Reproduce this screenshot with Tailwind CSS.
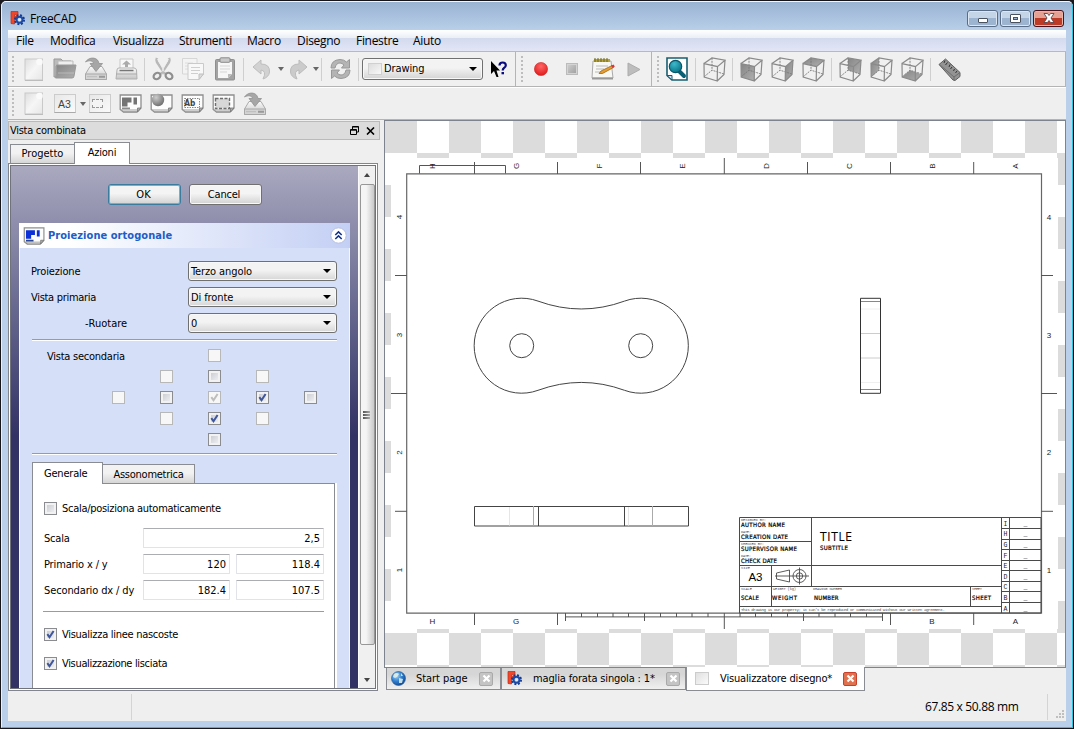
<!DOCTYPE html>
<html lang="it">
<head>
<meta charset="utf-8">
<title>FreeCAD</title>
<script src="https://cdn.jsdelivr.net/npm/@tailwindcss/browser@4"></script>
</head>
<body class="bg-[#1a1a1e] w-[1074px] h-[729px] overflow-hidden text-black font-['DejaVu_Sans_Condensed','DejaVu_Sans',sans-serif] text-[11px] leading-[14px] [font-stretch:condensed]">
<svg width="0" height="0" class="absolute">
  <defs>
    <linearGradient id="gGray" x1="0" y1="0" x2="0" y2="1"><stop offset="0" stop-color="#fafafa"/><stop offset="1" stop-color="#c4c4c4"/></linearGradient>
    <linearGradient id="gDark" x1="0" y1="0" x2="1" y2="1"><stop offset="0" stop-color="#858585"/><stop offset="1" stop-color="#b0b0b0"/></linearGradient>
    <linearGradient id="gPage" x1="0" y1="0" x2="1" y2="1"><stop offset="0" stop-color="#dedede"/><stop offset=".5" stop-color="#f6f6f6"/><stop offset="1" stop-color="#e6e6e6"/></linearGradient>
    <radialGradient id="gRed" cx=".5" cy=".3" r=".7"><stop offset="0" stop-color="#f66"/><stop offset="1" stop-color="#e01a1a"/></radialGradient>
    <radialGradient id="gTeal" cx=".4" cy=".3" r=".7"><stop offset="0" stop-color="#3fb8cc"/><stop offset="1" stop-color="#087688"/></radialGradient>
    <radialGradient id="gGlobe" cx=".35" cy=".3" r=".8"><stop offset="0" stop-color="#a9d4f5"/><stop offset=".5" stop-color="#2f7fce"/><stop offset="1" stop-color="#0d3f8c"/></radialGradient>
    <radialGradient id="gBall" cx=".35" cy=".3" r=".8"><stop offset="0" stop-color="#ccc"/><stop offset="1" stop-color="#666"/></radialGradient>
    <symbol id="cube" viewBox="0 0 23 25">
      <path d="M9 .8V13.2M1 19.8 9 13.2 21 17" fill="none" stroke="#777" stroke-width=".9" stroke-dasharray="2 1"/>
      <path d="M1 6.600 14.500 9.600 14.200 24 1.200 20ZM1 6.600 9 .9 22 3.200 14.500 9.600M22 3.200 21 17.500 14.200 24" fill="none" stroke="#8a8a8a" stroke-width="1.200"/>
    </symbol>
    <symbol id="save" viewBox="0 0 24 24">
      <path d="M1.500 17 6 9.500H18L22.500 17V22.500H1.500Z" fill="url(#gGray)" stroke="#aaa"/>
      <path d="M1.500 17H22.500V22.500H1.500Z" fill="#d4d4d4" stroke="#a8a8a8"/>
      <path d="M3 19.700H13" stroke="#bbb"/><path d="M15 19.700H21" stroke="#999" stroke-width="2"/>
      <path d="M1.500 5C5-.5 14-.5 15 6.500H18.500L12 14.500 6 6.500H9.500C9 3.500 5 3 1.500 5Z" fill="#a6a6a6" stroke="#929292" stroke-width=".8"/>
    </symbol>
    <symbol id="newdoc" viewBox="0 0 20 23">
      <rect x="1" y="1" width="17.500" height="21" fill="url(#gPage)" stroke="#c9c9c9"/><circle cx="15.500" cy="4" r="3.300" fill="#fafafa"/><path d="M1 22.500H19" stroke="#bdbdbd"/>
    </symbol>
    <symbol id="sheet" viewBox="0 0 23 19">
      <path d="M1.200 1H22V14L18 18H4.500L1.200 15.500Z" fill="#fdfdfd" stroke="#8e8e8e" stroke-width="1.300"/>
      <path d="M2 16H18M4 18H18" fill="none" stroke="#a0a0a0"/><path d="M22 14H18.500V18Z" fill="#aaa" stroke="#777" stroke-width=".8"/>
    </symbol>
    <symbol id="fc" viewBox="0 0 15 15">
      <path d="M1 .5H8V3.800H4.500V5.500H7V8.500H4.500V13L1 12.500Z" fill="#f0462a" stroke="#b92a17" stroke-width=".7"/>
      <circle cx="9.500" cy="8.700" r="4.200" fill="none" stroke="#163a8a" stroke-width="2.600" stroke-dasharray="1.800 1.500"/>
      <circle cx="9.500" cy="8.700" r="3" fill="#b9cff0" stroke="#1d4aa5" stroke-width="2"/><circle cx="9.500" cy="8.700" r="1.300" fill="#e8effa"/>
    </symbol>
    <symbol id="tri" viewBox="0 0 8 4"><path d="M0 0H8L4 4Z"/></symbol>
    <symbol id="chk" viewBox="0 0 9 9"><path d="M1.300 4.200 3.500 7.200 7.600 1" fill="none" stroke="currentColor" stroke-width="2"/></symbol>
    <symbol id="x" viewBox="0 0 9 9"><path d="M1.500 1.500 7.500 7.500M7.500 1.500 1.500 7.500" stroke="#fff" stroke-width="2.200"/></symbol>
  </defs>
</svg>

<div class="w-[1074px] h-[729px] rounded-t-[6px] border border-[#15151a] border-r-black overflow-hidden bg-[#bad0ea]">
<div class="w-[1072px] h-[727px] flex flex-col border-l border-t border-l-[#e8f1fa] border-t-[#f2f7fc] border-r border-r-[#2fc4dd] border-b border-b-[#35bdd5] rounded-t-[5px] bg-linear-to-b from-[#99b3d2] to-[#bad0ea] to-[29px] px-[6px]">

  <!-- title bar -->
  <header class="h-7 shrink-0 flex items-center pl-[2px] pt-[5px] font-['Open_Sans'] [font-stretch:normal] text-[12px]">
    <svg class="w-[15px] h-[15px]"><use href="#fc"/></svg>
    <span class="ml-[5px] tracking-[-0.3px] grow">FreeCAD</span>
    <div class="flex gap-[2px] mr-[2px] -mt-px">
      <div class="w-[31px] h-[17px] rounded-[3px] border border-[#5a6d87] bg-linear-to-b from-[#c5d5e8] from-45% to-[#9cb4d0] to-50% shadow-[inset_0_0_0_1px_#dbe6f2] flex justify-center items-end pb-[3px]"><i class="w-[10px] h-[5px] bg-white border border-[#4a5260] rounded-[1px]"></i></div>
      <div class="w-[31px] h-[17px] rounded-[3px] border border-[#5a6d87] bg-linear-to-b from-[#c5d5e8] from-45% to-[#9cb4d0] to-50% shadow-[inset_0_0_0_1px_#dbe6f2] flex justify-center items-center"><i class="w-[11px] h-[9px] bg-white border border-[#4a5260] rounded-[1px] flex items-center justify-center"><b class="w-[5px] h-[3px] border border-[#4a5260] bg-[#9cb4d0]"></b></i></div>
      <div class="w-[31px] h-[17px] rounded-[3px] border border-[#4c1018] bg-linear-to-b from-[#e5a294] from-45% to-[#bd3b26] to-50% shadow-[inset_0_0_0_1px_#eab5a8] flex justify-center items-center"><svg class="w-[12px] h-[10px]" viewBox="0 0 12 10"><path d="M1 .5H4.500L6 2.500 7.500 .5H11L8 5 11 9.500H7.500L6 7.500 4.500 9.500H1L4 5Z" fill="#fff" stroke="#57464f" stroke-width=".9"/></svg></div>
    </div>
  </header>

  <div class="h-[691px] w-[1058px] shrink-0 flex flex-col bg-[#efefef]">
    <!-- menu -->
    <nav class="h-[22px] shrink-0 pl-2 flex items-center gap-[16px] whitespace-nowrap font-['Open_Sans'] [font-stretch:normal] text-[12px] leading-[16px] tracking-[-0.3px] border-b border-[#b5b9c6] bg-[#e1e5f5] [background-image:linear-gradient(#fff,#eaeff6_8px,#d3daee_8px,#e2e6f6)]">
      <span class="w-[18px]">File</span><span class="w-[47px]">Modifica</span><span class="w-[50px]">Visualizza</span><span class="w-[52px]">Strumenti</span><span class="w-[34px]">Macro</span><span class="w-[43px]">Disegno</span><span class="w-[41px]">Finestre</span><span>Aiuto</span>
    </nav>

    <!-- first toolbar row -->
    <div class="h-[35px] shrink-0 flex border-b border-[#b4b4b4] bg-[#f0f0f0] shadow-[0_1px_0_#fff]">
      <div class="w-[508px] flex items-center border-r border-[#b4b4b4]">
        <div class="w-[10px] pl-[4px]"><div class="w-[2px] h-[27px] [background-image:repeating-linear-gradient(#bdbdbd_0_2px,transparent_2px_4px)]"></div></div>
        <div class="w-[31px] flex justify-center"><svg class="w-[20px] h-[23px]"><use href="#newdoc"/></svg></div>
        <div class="w-[31px] flex justify-center"><svg class="w-[24px] h-[22px]" viewBox="0 0 24 22"><path d="M1 1H8L10 3H18V8H3V19H1Z" fill="#bcbcbc" stroke="#999"/><path d="M5 3H20V9H5Z" fill="#eee" stroke="#bbb"/><path d="M4 7H23L21 18Q21 20 19 20H2.500Q4 18 3.500 7Z" fill="url(#gDark)" stroke="#999"/><path d="M5 15H21" stroke="#ccc" stroke-width=".6"/></svg></div>
        <div class="w-[31px] flex justify-center"><svg class="w-[24px] h-[24px]"><use href="#save"/></svg></div>
        <div class="w-[31px] flex justify-center"><svg class="w-[23px] h-[23px]" viewBox="0 0 23 23"><path d="M5 1H18V12H5Z" fill="#f8f8f8" stroke="#c8c8c8"/><path d="M11.500 2.500 16 6.500H13V9H10V6.500H7Z" fill="#aaa"/><path d="M2 12Q2 10 4 10H19Q21 10 21.500 12L22 21H1Z" fill="url(#gGray)" stroke="#b0b0b0"/><path d="M4.500 12.500H18.500" stroke="#777" stroke-width="1.500"/><path d="M1 16H22" stroke="#aaa"/></svg></div>
        <div class="w-[6px] flex pl-[2px]"><i class="w-px h-[23px] bg-[#cfcfcf]"></i></div>
        <div class="w-[29px] flex justify-center"><svg class="w-[22px] h-[24px]" viewBox="0 0 22 24"><path d="M5 1Q4 3 5 5L13 17M17 1Q18 3 17 5L9 17" stroke="#b8b8b8" stroke-width="2.600" fill="none"/><path d="M5.500 2 12.500 15M16.500 2 9.500 15" stroke="#eee" stroke-width=".9" fill="none"/><ellipse cx="5" cy="19" rx="3.600" ry="3" transform="rotate(-35 5 19)" fill="none" stroke="#8f8f8f" stroke-width="2.200"/><ellipse cx="17" cy="19" rx="3.600" ry="3" transform="rotate(35 17 19)" fill="none" stroke="#8f8f8f" stroke-width="2.200"/></svg></div>
        <div class="w-[32px] flex justify-center"><svg class="w-[24px] h-[24px]" viewBox="0 0 24 24"><path d="M1.500 1.500H16V17H1.500Z" fill="#f3f3f3" stroke="#d6d6d6"/><path d="M4 6H12M4 9H12M4 12H10" stroke="#dcdcdc"/><path d="M7 6.500H22.500V17L18 22.500H7Z" fill="#f8f8f8" stroke="#cacaca"/><path d="M10 10.500H19M10 13.500H19M10 16.500H17" stroke="#cfcfcf"/><path d="M22.500 17H18V22.500Z" fill="#ddd" stroke="#c0c0c0"/></svg></div>
        <div class="w-[31px] flex justify-center"><svg class="w-[22px] h-[24px]" viewBox="0 0 22 24"><rect x="1.500" y="2.500" width="19" height="20.500" rx="1" fill="#a3a3a3" stroke="#8f8f8f"/><path d="M4 5H18V17L14 21H4Z" fill="#f6f6f6"/><path d="M18 17H14V21Z" fill="#bbb"/><path d="M6 9H16M6 12H16M6 15H13" stroke="#d5d5d5"/><rect x="6" y=".8" width="10" height="4.500" rx="1" fill="#c8c8c8" stroke="#8a8a8a"/></svg></div>
        <div class="w-[7px] flex pl-[3px]"><i class="w-px h-[23px] bg-[#cfcfcf]"></i></div>
        <div class="w-[28px] flex justify-center"><svg class="w-[19px] h-[21px]" viewBox="0 0 19 21"><path d="M1 8 9 1V5Q18 5 17.500 13 17 18 11 20 15 12 9 11V15Z" fill="#d2d2d2" stroke="#bdbdbd"/></svg></div>
        <div class="w-[12px] flex pl-[3px]"><svg class="w-[6px] h-[4px] fill-[#666]" viewBox="0 0 8 4" preserveAspectRatio="none"><path d="M0 0H8L4 4Z"/></svg></div>
        <div class="w-[23px] flex justify-center"><svg class="w-[19px] h-[21px] -scale-x-100" viewBox="0 0 19 21"><path d="M1 8 9 1V5Q18 5 17.500 13 17 18 11 20 15 12 9 11V15Z" fill="#cbcbcb" stroke="#bbb"/></svg></div>
        <div class="w-[9px] flex pl-[3px]"><svg class="w-[6px] h-[4px] fill-[#666]" viewBox="0 0 8 4" preserveAspectRatio="none"><path d="M0 0H8L4 4Z"/></svg></div>
        <div class="w-[5px] flex pl-[2px]"><i class="w-px h-[23px] bg-[#cfcfcf]"></i></div>
        <div class="w-[32px] flex justify-center"><svg class="w-[21px] h-[22px]" viewBox="0 0 21 22"><path d="M1 10Q1 2 10 1.500 14 1.500 16.500 4L19.500 1.500V10H11.500L14 7Q12 5 10 5 6 5 5 10Z" fill="#b4b4b4" stroke="#989898"/><path d="M20 12Q20 20 11 20.500 7 20.500 4.500 18L1.500 20.500V12H9.500L7 15Q9 17 11 17 15 17 16 12Z" fill="#b4b4b4" stroke="#989898"/></svg></div>
        <div class="w-[6px] flex pl-[2px]"><i class="w-px h-[23px] bg-[#cfcfcf]"></i></div>
        <div class="w-[121px] h-[22px] rounded-[3px] border border-[#707070] bg-linear-to-b from-[#f3f3f3] from-45% to-[#d4d4d4] shadow-[inset_0_0_0_1px_#f8f8f8] flex items-center px-[5px]">
          <i class="w-[14px] h-[12px] border border-[#d0d0d0] bg-linear-to-br from-[#ddd] to-[#f8f8f8]"></i><span class="ml-[2px] grow tracking-[-0.1px]">Drawing</span><svg class="w-[8px] h-[4px]"><use href="#tri"/></svg>
        </div>
        <div class="w-[31px] flex justify-center"><svg class="w-[18px] h-[17px]" viewBox="0 0 18 17"><path d="M1 0V13L4 10 6.500 16H8.500L6.500 9.500H10Z" fill="#000"/><path d="M9.500 4.500Q9.500 1.500 12.700 1.500 15.800 1.500 15.800 4.300 15.800 6 14 7 12.700 7.800 12.700 9.500" fill="none" stroke="#0a0a80" stroke-width="2.200"/><rect x="11.500" y="11" width="2.500" height="2.300" fill="#0a0a80"/></svg></div>
      </div>
      <div class="w-[136px] flex items-center border-r border-[#b4b4b4]">
        <div class="w-[9px] pl-[5px]"><div class="w-[2px] h-[27px] [background-image:repeating-linear-gradient(#bdbdbd_0_2px,transparent_2px_4px)]"></div></div>
        <div class="w-[31px] flex justify-center"><svg class="w-[14px] h-[14px]" viewBox="0 0 14 14"><circle cx="7" cy="7" r="6.600" fill="url(#gRed)" stroke="#cf2a2a" stroke-width=".6"/></svg></div>
        <div class="w-[31px] flex justify-center"><i class="w-[12px] h-[12px] border-2 border-[#d4d4d4] bg-linear-to-br from-[#ccc] to-[#a2a2a2] outline outline-[#bbb] -outline-offset-1"></i></div>
        <div class="w-[31px] flex justify-center"><svg class="w-[24px] h-[22px]" viewBox="0 0 24 22"><path d="M2 3H20L22 20H1Z" fill="#f7f7f4" stroke="#aaa"/><path d="M1 19.500H22V21.500H1Z" fill="#999"/><path d="M3 1H19V4H3Z" fill="#b8a530"/><path d="M4 0V4M7 0V4M10 0V4M13 0V4M16 0V4" stroke="#6d6220"/><path d="M5 8H17M5 11H13M4 14H10" stroke="#bbb"/><path d="M8 15.500 10 13 21 7.500 22.500 9.500 11.500 15.500Z" fill="#e89c2d" stroke="#8e5b14" stroke-width=".7"/><path d="M20 7.800 22.500 6.500 23.800 8.500 21.500 10Z" fill="#d33"/></svg></div>
        <div class="w-[31px] flex justify-center"><svg class="w-[14px] h-[15px]" viewBox="0 0 14 15"><path d="M1 1 13 7.500 1 14Z" fill="#bdbdbd" stroke="#acacac"/></svg></div>
      </div>
      <div class="grow flex items-center border-r border-[#b4b4b4]">
        <div class="w-[9px] pl-[5px]"><div class="w-[2px] h-[27px] [background-image:repeating-linear-gradient(#bdbdbd_0_2px,transparent_2px_4px)]"></div></div>
        <div class="w-[31px] flex justify-center"><svg class="w-[22px] h-[24px]" viewBox="0 0 22 24"><path d="M1 1H21V23H6L1 18.500Z" fill="#fff" stroke="#175d70" stroke-width="1.600"/><path d="M1 18.500H6V23Z" fill="#cde" stroke="#175d70"/><path d="M13 14 18 19" stroke="#0b5f72" stroke-width="4" stroke-linecap="round"/><circle cx="9.500" cy="9.500" r="6.200" fill="url(#gTeal)" stroke="#0b5568" stroke-width="1.200"/></svg></div>
        <div class="w-[7px] flex pl-[3px]"><i class="w-px h-[23px] bg-[#cfcfcf]"></i></div>
        <div class="w-[31px] flex justify-center"><svg class="w-[23px] h-[25px]"><use href="#cube"/></svg></div>
        <div class="w-[6px] flex pl-[2px]"><i class="w-px h-[23px] bg-[#cfcfcf]"></i></div>
        <div class="w-[31px] flex justify-center"><svg class="w-[23px] h-[25px]"><path d="M1 6.600 14.500 9.600 14.200 24 1.200 20Z" fill="url(#gDark)"/><use href="#cube"/></svg></div>
        <div class="w-[31px] flex justify-center"><svg class="w-[23px] h-[25px]"><path d="M14.500 9.600 22 3.200 21 17.500 14.200 24Z" fill="url(#gDark)"/><use href="#cube"/></svg></div>
        <div class="w-[31px] flex justify-center"><svg class="w-[23px] h-[25px]"><path d="M1 6.600 9 .9 22 3.200 14.500 9.600Z" fill="url(#gDark)"/><use href="#cube"/></svg></div>
        <div class="w-[6px] flex pl-[2px]"><i class="w-px h-[23px] bg-[#cfcfcf]"></i></div>
        <div class="w-[31px] flex justify-center"><svg class="w-[23px] h-[25px]"><path d="M9 .9 22 3.200 21 17 9 13.200Z" fill="url(#gDark)"/><use href="#cube"/></svg></div>
        <div class="w-[31px] flex justify-center"><svg class="w-[23px] h-[25px]"><path d="M1 6.600 9 .9V13.200L1.200 20Z" fill="url(#gDark)"/><use href="#cube"/></svg></div>
        <div class="w-[31px] flex justify-center"><svg class="w-[23px] h-[25px]"><path d="M1.200 20 9 13.200 21 17.500 14.200 24Z" fill="url(#gDark)"/><use href="#cube"/></svg></div>
        <div class="w-[6px] flex pl-[2px]"><i class="w-px h-[23px] bg-[#cfcfcf]"></i></div>
        <div class="w-[31px] flex justify-center"><svg class="w-[23px] h-[23px]" viewBox="0 0 23 23"><path d="M1 6.500 7.500 1 22 14.500V18.500L17 22.500 15 22Z" fill="#939393" stroke="#5f5f5f"/><path d="M1.500 6.500 16 19 22 14.500M16 19V22" fill="none" stroke="#6d6d6d"/><path d="M7 2.500 6 5M9.500 4.500 7.500 7M12 6.500 11 9M14 9 12.500 11M16.500 11 15.500 13M19 13 17.500 15" stroke="#333"/></svg></div>
      </div>
    </div>

    <!-- second toolbar row -->
    <div class="h-[33px] shrink-0 flex items-center border-b border-[#b4b4b4] pt-px">
      <div class="w-[10px] pl-[4px]"><div class="w-[2px] h-[27px] [background-image:repeating-linear-gradient(#bdbdbd_0_2px,transparent_2px_4px)]"></div></div>
      <div class="w-[31px] flex justify-center"><svg class="w-[20px] h-[23px]"><use href="#newdoc"/></svg></div>
      <div class="w-[31px] flex justify-center"><div class="w-[22px] h-[19px] border border-[#ccc] border-b-[#aaa] bg-linear-to-br from-[#e8e8e8] to-[#fafafa] text-center text-[10.500px] leading-[18px] text-[#444] font-['Liberation_Sans']">A3</div></div>
      <div class="w-[5px] flex"><svg class="w-[6px] h-[4px] shrink-0 fill-[#666]" viewBox="0 0 8 4" preserveAspectRatio="none"><path d="M0 0H8L4 4Z"/></svg></div>
      <div class="w-[30px] flex justify-center"><div class="w-[22px] h-[19px] border border-[#ccc] border-b-[#aaa] bg-linear-to-br from-[#e8e8e8] to-[#fafafa] p-[4px_2px]"><div class="w-[11px] h-[9px] border border-dashed border-[#999] bg-[#f4f4f4]"></div></div></div>
      <div class="w-[31px] flex justify-center"><svg class="w-[23px] h-[19px]" viewBox="0 0 23 19"><use href="#sheet"/><path d="M3 3.500H12.500V8.500H8.500V12.500H3Z" fill="#747474"/><path d="M14.500 3.500H18V10.500H14.500Z" fill="#747474"/><path d="M3 13.500H11V15.300H3Z" fill="#8c8c8c"/></svg></div>
      <div class="w-[31px] flex justify-center"><svg class="w-[23px] h-[19px] overflow-visible" viewBox="0 0 23 19"><use href="#sheet"/><circle cx="8" cy="6" r="6.200" fill="url(#gBall)"/></svg></div>
      <div class="w-[31px] flex justify-center"><svg class="w-[23px] h-[19px]" viewBox="0 0 23 19"><use href="#sheet"/><path d="M3.500 4.500H18.500V13.500H3.500Z" fill="none" stroke="#888" stroke-dasharray="1.500 1"/><text x="3.200" y="12" font-size="8.500" font-weight="bold" fill="#444" textLength="11" lengthAdjust="spacingAndGlyphs" font-family="DejaVu Sans">Ab</text></svg></div>
      <div class="w-[31px] flex justify-center"><svg class="w-[23px] h-[19px]" viewBox="0 0 23 19"><use href="#sheet"/><path d="M3.500 4.500H17.500V14.500H3.500Z" fill="#d8d8d8" stroke="#6e6e6e" stroke-width="1.400" stroke-dasharray="3 1.500"/></svg></div>
      <div class="w-[31px] flex justify-center"><svg class="w-[24px] h-[24px]"><use href="#save"/></svg></div>
    </div>

    <!-- dock panel and document area -->
    <div class="h-[571px] shrink-0 flex">
      <aside class="w-[376px] shrink-0">
        <div class="mt-[1px] w-[372px] h-[19px] border border-[#bababa] bg-[#dcdcdc] flex items-center pl-[1px] pr-[4px]">
          <span class="grow tracking-[-0.28px] pt-px">Vista combinata</span>
          <svg class="w-[9px] h-[9px] mr-[7px]" viewBox="0 0 9 9"><path d="M2.500 3V.5H8.500V6H6.500M2.500 1H8.500M.5 3.500H6.500V8.500H.5ZM.5 4.200H6.500" fill="none" stroke="#000"/></svg>
          <svg class="w-[9px] h-[8px]" viewBox="0 0 9 8"><path d="M1 .5 8 7.500M8 .5 1 7.500" stroke="#000" stroke-width="1.600"/></svg>
        </div>
        <div class="flex items-end h-[24px] pl-[2px] -mb-px relative">
          <div class="w-[65px] h-[19px] mb-px border border-b-0 border-[#8a8c94] bg-linear-to-b from-[#f2f2f2] from-45% to-[#d6d6d6] text-center leading-[18px]">Progetto</div>
          <div class="w-[56px] h-[22px] -ml-px border border-b-0 border-[#8a8c94] bg-white text-center leading-[20px] tracking-[-0.25px]">Azioni</div>
        </div>
        <div class="w-[370px] h-[528px] border border-[#83858e] bg-white p-px">
          <div class="w-full h-[524px] border border-[#70727c] flex">
            <div class="w-[347px] h-[522px] shrink-0 overflow-hidden bg-linear-to-b from-[#aaa9c0] to-[#333264] to-[270px] pt-[18px]">
              <div class="flex pl-[97px] gap-2">
                <button class="w-[73px] h-[21px] rounded-[3px] border border-[#3a7b9e] bg-linear-to-b from-[#f4f4f4] from-45% to-[#d2d2d2] shadow-[inset_0_0_0_1px_#3fc3ef] pr-[2px] pt-px">OK</button>
                <button class="w-[73px] h-[21px] rounded-[3px] border border-[#707070] bg-linear-to-b from-[#f4f4f4] from-45% to-[#d2d2d2] shadow-[inset_0_0_0_1px_#f8f8f8] tracking-[-0.2px] pr-[3px] pt-px">Cancel</button>
              </div>
              <section class="mt-[18px] ml-2 w-[331px]">
                <div class="h-[25px] pl-1 pr-[3px] flex items-center bg-linear-to-r from-white from-15% to-[#c3cff4]">
                  <svg class="w-[22px] h-[18px]" viewBox="0 0 23 19"><use href="#sheet"/><path d="M3 3.500H12.500V8.500H8.500V12.500H3Z" fill="#0b2fd8"/><path d="M14.500 3.500H17.500V10H14.500Z" fill="#0b2fd8"/><path d="M3 13.500H11V15.300H3Z" fill="#2a4590"/></svg>
                  <b class="ml-[3px] grow text-[#215dc6] text-[11px] tracking-[0.05px]">Proiezione ortogonale</b>
                  <svg class="w-[17px] h-[17px]" viewBox="0 0 17 17"><circle cx="8.500" cy="8.500" r="7.700" fill="#fff" stroke="#b4bfe0"/><path d="M5.300 8 8.500 4.900 11.700 8M5.300 12 8.500 8.900 11.700 12" fill="none" stroke="#12318d" stroke-width="1.500"/></svg>
                </div>
                <div class="h-[440px] border-x border-[#f3f6ff] bg-[#d6dff8] px-[11px] pt-[13px]">
                  <div class="flex flex-col gap-[6px]">
                    <div class="flex items-center"><span class="w-[157px] tracking-[-0.15px] pt-px">Proiezione</span><div class="w-[149px] h-5 -mr-2 rounded-[3px] border border-[#707070] bg-linear-to-b from-[#f3f3f3] from-45% to-[#d6d6d6] shadow-[inset_0_0_0_1px_#f8f8f8] flex items-center pl-[2px] pr-[5px]"><span class="grow tracking-[-0.1px] pt-px">Terzo angolo</span><svg class="w-[8px] h-[4px]"><use href="#tri"/></svg></div></div>
                    <div class="flex items-center"><span class="w-[157px] tracking-[-0.3px] pt-px">Vista primaria</span><div class="w-[149px] h-5 -mr-2 rounded-[3px] border border-[#707070] bg-linear-to-b from-[#f3f3f3] from-45% to-[#d6d6d6] shadow-[inset_0_0_0_1px_#f8f8f8] flex items-center pl-[2px] pr-[5px]"><span class="grow tracking-[-0.1px] pt-px">Di fronte</span><svg class="w-[8px] h-[4px]"><use href="#tri"/></svg></div></div>
                    <div class="flex items-center"><span class="w-[157px] pl-[54px] pt-px">-Ruotare</span><div class="w-[149px] h-5 -mr-2 rounded-[3px] border border-[#707070] bg-linear-to-b from-[#f3f3f3] from-45% to-[#d6d6d6] shadow-[inset_0_0_0_1px_#f8f8f8] flex items-center pl-[2px] pr-[5px]"><span class="grow pt-px">0</span><svg class="w-[8px] h-[4px]"><use href="#tri"/></svg></div></div>
                  </div>
                  <div class="mt-[6px] ml-px w-[305px] h-[2px] border-t border-[#9b9b9b] bg-white"></div>
                  <div class="h-[97px] mt-2 flex">
                    <span class="w-[81px] pl-4 pt-px whitespace-nowrap tracking-[-0.25px]">Vista secondaria</span>
                    <div class="grid grid-cols-5 gap-x-[35px] gap-y-[8px] w-[205px] h-[97px]">
                      <i class="w-[13px] h-[13px] col-start-3 border border-[#b8b8b8] bg-[#f7f7f7]"></i>
                      <i class="w-[13px] h-[13px] col-start-2 border border-[#b8b8b8] bg-[#f7f7f7]"></i>
                      <i class="w-[13px] h-[13px] border border-[#8a8c90] bg-linear-to-br from-[#c3c6cf] to-[#f6f6f6] shadow-[inset_0_0_0_2px_#f2f2f2]"></i>
                      <i class="w-[13px] h-[13px] border border-[#b8b8b8] bg-[#f7f7f7]"></i>
                      <i class="w-[13px] h-[13px] col-start-1 border border-[#b8b8b8] bg-[#f7f7f7]"></i>
                      <i class="w-[13px] h-[13px] border border-[#8a8c90] bg-linear-to-br from-[#c3c6cf] to-[#f6f6f6] shadow-[inset_0_0_0_2px_#f2f2f2]"></i>
                      <i class="w-[13px] h-[13px] border border-[#b8b8b8] bg-[#f7f7f7] p-px text-[#bdbdbd]"><svg class="w-[9px] h-[9px]"><use href="#chk"/></svg></i>
                      <i class="w-[13px] h-[13px] border border-[#8a8c90] bg-linear-to-br from-[#c3c6cf] to-[#f6f6f6] shadow-[inset_0_0_0_2px_#f2f2f2] p-px text-[#3f5699]"><svg class="w-[9px] h-[9px]"><use href="#chk"/></svg></i>
                      <i class="w-[13px] h-[13px] border border-[#8a8c90] bg-linear-to-br from-[#c3c6cf] to-[#f6f6f6] shadow-[inset_0_0_0_2px_#f2f2f2]"></i>
                      <i class="w-[13px] h-[13px] col-start-2 border border-[#b8b8b8] bg-[#f7f7f7]"></i>
                      <i class="w-[13px] h-[13px] border border-[#8a8c90] bg-linear-to-br from-[#c3c6cf] to-[#f6f6f6] shadow-[inset_0_0_0_2px_#f2f2f2] p-px text-[#3f5699]"><svg class="w-[9px] h-[9px]"><use href="#chk"/></svg></i>
                      <i class="w-[13px] h-[13px] border border-[#b8b8b8] bg-[#f7f7f7]"></i>
                      <i class="w-[13px] h-[13px] col-start-3 border border-[#8a8c90] bg-linear-to-br from-[#c3c6cf] to-[#f6f6f6] shadow-[inset_0_0_0_2px_#f2f2f2]"></i>
                    </div>
                  </div>
                  <div class="mt-[7px] ml-px w-[305px] h-[2px] border-t border-[#9b9b9b] bg-white"></div>
                  <div class="mt-[7px] ml-px flex items-end h-[22px] relative">
                    <div class="w-[71px] h-[22px] border border-b-0 border-[#8a8c94] bg-white pl-[11px] leading-[21px] tracking-[-0.2px]">Generale</div>
                    <div class="w-[92px] h-[19px] mb-px border border-b-0 border-l-0 border-[#8a8c94] bg-linear-to-b from-[#f2f2f2] from-45% to-[#d6d6d6] text-center leading-[19px] tracking-[-0.25px]">Assonometrica</div>
                  </div>
                  <div class="-mt-px ml-px w-[303px] h-[220px] border border-[#8a8c94] bg-white shadow-[2px_0_0_#fff] pl-[11px] pt-[17px]">
                    <div class="flex items-center gap-[5px]"><i class="w-[13px] h-[13px] border border-[#8a8c90] bg-linear-to-br from-[#c3c6cf] to-[#f6f6f6] shadow-[inset_0_0_0_2px_#f2f2f2]"></i><span class="tracking-[-0.29px] pt-px">Scala/posiziona automaticamente</span></div>
                    <div class="mt-[12px] flex items-center text-right"><span class="w-[99px] text-left tracking-[-0.2px] pt-px">Scala</span><div class="w-[181px] h-[20px] border border-[#e2e3ea] border-t-[#abadb3] rounded-[1px] pr-[3px] leading-[19px]">2,5</div></div>
                    <div class="mt-[6px] flex items-center text-right"><span class="w-[99px] text-left tracking-[-0.15px] pt-px">Primario x / y</span><div class="w-[87px] h-[20px] border border-[#e2e3ea] border-t-[#abadb3] rounded-[1px] pr-[3px] leading-[19px]">120</div><div class="ml-[6px] w-[88px] h-[20px] border border-[#e2e3ea] border-t-[#abadb3] rounded-[1px] pr-[3px] leading-[19px]">118.4</div></div>
                    <div class="mt-[6px] flex items-center text-right"><span class="w-[99px] text-left tracking-[-0.12px] pt-px">Secondario dx / dy</span><div class="w-[87px] h-[20px] border border-[#e2e3ea] border-t-[#abadb3] rounded-[1px] pr-[3px] leading-[19px]">182.4</div><div class="ml-[6px] w-[88px] h-[20px] border border-[#e2e3ea] border-t-[#abadb3] rounded-[1px] pr-[3px] leading-[19px]">107.5</div></div>
                    <div class="mt-[11px] -ml-px w-[281px] h-px bg-[#9b9b9b]"></div>
                    <div class="mt-[15px] flex items-center gap-[5px] text-[#3f5699]"><i class="w-[13px] h-[13px] border border-[#8a8c90] bg-linear-to-br from-[#c3c6cf] to-[#f6f6f6] shadow-[inset_0_0_0_2px_#f2f2f2] p-px"><svg class="w-[9px] h-[9px]"><use href="#chk"/></svg></i><span class="text-black tracking-[-0.28px] pt-px">Visualizza linee nascoste</span></div>
                    <div class="mt-[14px] flex items-center gap-[5px] text-[#3f5699]"><i class="w-[13px] h-[13px] border border-[#8a8c90] bg-linear-to-br from-[#c3c6cf] to-[#f6f6f6] shadow-[inset_0_0_0_2px_#f2f2f2] p-px"><svg class="w-[9px] h-[9px]"><use href="#chk"/></svg></i><span class="text-black tracking-[-0.33px] pt-px">Visualizzazione lisciata</span></div>
                  </div>
                </div>
              </section>
            </div>
            <div class="w-[17px] h-[522px] shrink-0 bg-[#f0f0f0] border-l border-[#fafafa] flex flex-col items-center">
              <svg class="w-[6px] h-[4px] mt-[7px] shrink-0" viewBox="0 0 8 4" preserveAspectRatio="none"><path d="M0 4H8L4 0Z" fill="#444"/></svg>
              <div class="mt-[7px] w-[15px] h-[461px] rounded-[2px] border border-[#979797] bg-linear-to-r from-[#f5f5f5] from-40% to-[#c9c9c9] flex flex-col items-center justify-center gap-px pr-[2px]"><i class="w-[7px] h-[2px] bg-linear-to-r from-[#555] to-[#aaa]"></i><i class="w-[7px] h-[2px] bg-linear-to-r from-[#555] to-[#aaa]"></i><i class="w-[7px] h-[2px] bg-linear-to-r from-[#555] to-[#aaa]"></i></div>
              <svg class="w-[6px] h-[4px] mt-auto mb-[6px] shrink-0" viewBox="0 0 8 4" preserveAspectRatio="none"><path d="M0 0H8L4 4Z" fill="#444"/></svg>
            </div>
          </div>
        </div>
      </aside>

      <main class="w-[682px] shrink-0">
        <svg class="block w-[682px] h-[548px] font-['Liberation_Sans']" viewBox="384 120 682 548">
          <defs><pattern id="checker" x="385" y="121" width="64" height="64" patternUnits="userSpaceOnUse"><path d="M0 0H64V64H0Z" fill="#fff"/><path d="M0 0H32V32H0ZM32 32H64V64H32Z" fill="#dcdcdc"/></pattern></defs>
          <rect x="384.500" y="120.500" width="681" height="547" fill="url(#checker)" stroke="#7d848e"/>
          <rect x="391" y="158" width="667" height="471" fill="#fff"/>
          <g fill="none" stroke="#555" stroke-width="1">
            <path d="M406.700 173.900H1041.500V613.200H406.700Z" stroke-width="1.200" stroke="#666"/>
            <path d="M419.500 173.500V165.500H505.500V173.500M474.500 162V174M557.500 162V174M640.500 162V174M724.300 158V174M807.500 162V174M890.500 162V174M973.700 162V174"/>
            <path d="M474.500 613V625M557.500 613V625M724.300 613V629M890.500 613V625M973.700 613V625M395 275.500H407M391 393.500H407M395 511.300H407M1041 275.500H1053M1041 393.500H1057M1041 511.300H1053"/>
            <path d="M565.500 613V621M565.500 616.900H882.500M581.500 613V617M597.500 613V617M613 613V617M628.500 613V617M644.500 613V621M660.500 613V617M676.500 613V617M692 613V617M708 613V617M740 613V617M755.500 613V617M771.500 613V617M787.500 613V617M803.500 613V621M819 613V617M835 613V617M850.500 613V617M866.500 613V617M882.500 613V621"/>
            <path d="M538 301.100A126.300 126.300 0 0 0 624.500 301.100A47.500 47.500 0 1 1 624.500 390.300A126.300 126.300 0 0 0 538 390.300A47.500 47.500 0 1 1 538 301.100Z" stroke="#444"/>
            <circle cx="521.700" cy="345.700" r="12" stroke="#444"/><circle cx="640.700" cy="345.700" r="12" stroke="#444"/>
            <path d="M860 301.500H881M860 389.500H881" stroke="#888"/><path d="M860 333.500H881M860 358H881" stroke="#ccc"/><path d="M860 309H881M860 382.500H881" stroke="#f0f0f0"/><path d="M860.500 298.300H880.500V393.300H860.500Z" stroke="#333"/>
            <path d="M474.500 506.500H688.500V526H474.500Z" stroke="#444"/><path d="M538.500 506V526M624.500 506V526" stroke="#444"/><path d="M533.500 506V526M652.500 506V526" stroke="#aaa"/><path d="M509.500 507V525.500M628.500 507V525.500" stroke="#e6e6e6"/>
          </g>
          <g font-size="8" fill="#222" text-anchor="middle" font-family="Liberation Sans">
            <text transform="translate(435.300 166)rotate(-90)">H</text><text transform="translate(518.800 166)rotate(-90)">G</text><text transform="translate(601.800 166)rotate(-90)">F</text><text transform="translate(685 166)rotate(-90)">E</text><text transform="translate(768.500 166)rotate(-90)">D</text><text transform="translate(851.500 166)rotate(-90)">C</text><text transform="translate(935 166)rotate(-90)">B</text><text transform="translate(1018.300 166)rotate(-90)">A</text>
            <text x="432.500" y="624">H</text><text x="516" y="624">G</text><text x="932" y="624">B</text><text x="1015.500" y="624">A</text>
            <text transform="translate(402 217)rotate(-90)">4</text><text transform="translate(402 335)rotate(-90)">3</text><text transform="translate(402 452.500)rotate(-90)">2</text><text transform="translate(402 570)rotate(-90)">1</text>
            <text x="1049" y="220">4</text><text x="1049" y="338">3</text><text x="1049" y="455">2</text><text x="1049" y="573">1</text>
          </g>
          <!-- title block -->
          <g fill="none" stroke="#4a4a4a">
            <path d="M739.500 517.500H1041V613H739.500ZM811.500 517.500V586.500M739.500 541.500H811.500M739.500 565.500H1001.500M739.500 586.500H1001.500M739.500 606.500H1001.500M771.500 565.500V606.500M970.500 586.500V606.500M1001.500 517.500V613M1009.500 517.500V613"/>
            <path d="M1001.500 528.500H1041M1001.500 539.500H1041M1001.500 549.500H1041M1001.500 560.500H1041M1001.500 570.500H1041M1001.500 581.500H1041M1001.500 591.500H1041M1001.500 602.500H1041"/>
            <path d="M775 576H809M776.500 573 789.500 570V582L776.500 579ZM799.500 567.500V584.500" stroke-width=".9"/><circle cx="799.500" cy="576" r="6.500" stroke-width=".9"/><circle cx="799.500" cy="576" r="3.200" stroke-width=".9"/>
          </g>
          <g font-family="DejaVu Sans" fill="#000" font-size="6" stroke="#000" stroke-width=".2">
            <text x="741" y="527" textLength="44">AUTHOR NAME</text><text x="741" y="539" textLength="47">CREATION DATE</text><text x="741" y="551" textLength="56">SUPERVISOR NAME</text><text x="741" y="563" textLength="36">CHECK DATE</text>
            <text x="741" y="600" textLength="18">SCALE</text><text x="772" y="600" textLength="25">WEIGHT</text><text x="814" y="600" textLength="24.500">NUMBER</text><text x="972" y="600" textLength="19">SHEET</text><text x="820" y="550" textLength="28">SUBTITLE</text>
          </g>
          <g fill="#000">
            <text x="820" y="541" font-size="12" textLength="32" font-family="DejaVu Sans Condensed">TITLE</text>
            <text x="748.500" y="580.500" font-size="11.500" font-family="Liberation Sans" textLength="14">A3</text>
          </g>
          <g font-family="Liberation Mono" fill="#555" font-size="3.700">
            <text x="741" y="521" textLength="25">DESIGNED BY:</text><text x="741" y="533" textLength="10">DATE:</text><text x="741" y="545" textLength="23">CHECKED BY:</text><text x="741" y="557" textLength="10">DATE:</text><text x="741" y="569" textLength="9">SIZE</text>
            <text x="741" y="590" textLength="11">SCALE</text><text x="773" y="590" textLength="23">WEIGHT (kg)</text><text x="813" y="590" textLength="29">DRAWING NUMBER</text><text x="972" y="590" textLength="10">SHEET</text>
            <text x="741" y="611" font-size="4.200" textLength="204">This drawing is our property; it can't be reproduced or communicated without our written agreement.</text>
          </g>
          <g font-family="Liberation Mono" fill="#222" font-size="6.500" text-anchor="middle">
            <text x="1005.500" y="525.500">I</text><text x="1005.500" y="536">H</text><text x="1005.500" y="547">G</text><text x="1005.500" y="557.500">F</text><text x="1005.500" y="568">E</text><text x="1005.500" y="578.500">D</text><text x="1005.500" y="589">C</text><text x="1005.500" y="600">B</text><text x="1005.500" y="610.500">A</text>
            <text x="1025.500" y="525.500">_</text><text x="1025.500" y="536">_</text><text x="1025.500" y="547">_</text><text x="1025.500" y="557.500">_</text><text x="1025.500" y="568">_</text><text x="1025.500" y="578.500">_</text><text x="1025.500" y="589">_</text><text x="1025.500" y="600">_</text><text x="1025.500" y="610.500">_</text>
          </g>
        </svg>
        <div class="flex items-start pl-[2px]">
          <div class="w-[115px] h-[22px] border border-t-0 border-[#8a8c94] bg-linear-to-b from-[#d6d6d6] from-30% to-[#f0f0f0] flex items-center pl-[4px] pr-[7px]"><svg class="w-[15px] h-[15px]" viewBox="0 0 15 15"><circle cx="7.500" cy="7.500" r="7" fill="url(#gGlobe)" stroke="#24588f" stroke-width=".6"/><path d="M3 3Q6 1 8 3L6 6 4 7 2 6ZM8 7 12 8 11 12 8 12ZM10 2 12 5 10 5Z" fill="#e3f2e9" opacity=".85"/></svg><span class="ml-[10px] grow tracking-[-0.05px]">Start page</span><i class="w-[14px] h-[14px] rounded-[2px] border border-[#a9a9a9] bg-[#c4c4c4] flex items-center justify-center"><svg class="w-[9px] h-[9px]"><use href="#x"/></svg></i></div>
          <div class="w-[185px] h-[22px] border border-t-0 border-[#8a8c94] bg-linear-to-b from-[#d6d6d6] from-30% to-[#f0f0f0] flex items-center pl-[5px] pr-[5px]"><svg class="w-[15px] h-[15px]"><use href="#fc"/></svg><span class="ml-[11px] grow tracking-[-0.15px]">maglia forata singola : 1*</span><i class="w-[14px] h-[14px] rounded-[2px] border border-[#a9a9a9] bg-[#c4c4c4] flex items-center justify-center"><svg class="w-[9px] h-[9px]"><use href="#x"/></svg></i></div>
          <div class="w-[179px] h-[24px] border border-t-0 border-[#8a8c94] bg-white flex items-center pl-[8px] pr-[7px] mt-[-1px]"><i class="w-[14px] h-[13px] border border-[#ccc] bg-linear-to-br from-[#e0e0e0] to-[#fafafa]"></i><span class="ml-[11px] grow tracking-[-0.15px] pt-px">Visualizzatore disegno*</span><i class="w-[14px] h-[14px] rounded-[2px] border border-[#c8402a] bg-[#e0714e] flex items-center justify-center"><svg class="w-[9px] h-[9px]"><use href="#x"/></svg></i></div>
        </div>
      </main>
    </div>

    <!-- status bar -->
    <footer class="grow flex items-start pt-[3px] font-['Open_Sans'] [font-stretch:normal] text-[12px]">
      <div class="w-[124px] h-[26px] border-r border-[#d4d4d4]"></div>
      <span class="ml-auto mt-[6px] w-[122px] tracking-[-0.35px] whitespace-nowrap">67.85 x 50.88 mm</span>
      <i class="w-px h-[26px] bg-[#d4d4d4]"></i>
      <svg class="w-[18px] h-[26px]" viewBox="0 0 18 26"><path d="M14 16H16V18H14ZM11 19H13V21H11ZM14 19H16V21H14ZM8 22H10V24H8ZM11 22H13V24H11ZM14 22H16V24H14Z" fill="#bfbfbf"/></svg>
    </footer>
  </div>
</div>
</div>
</body>
</html>
